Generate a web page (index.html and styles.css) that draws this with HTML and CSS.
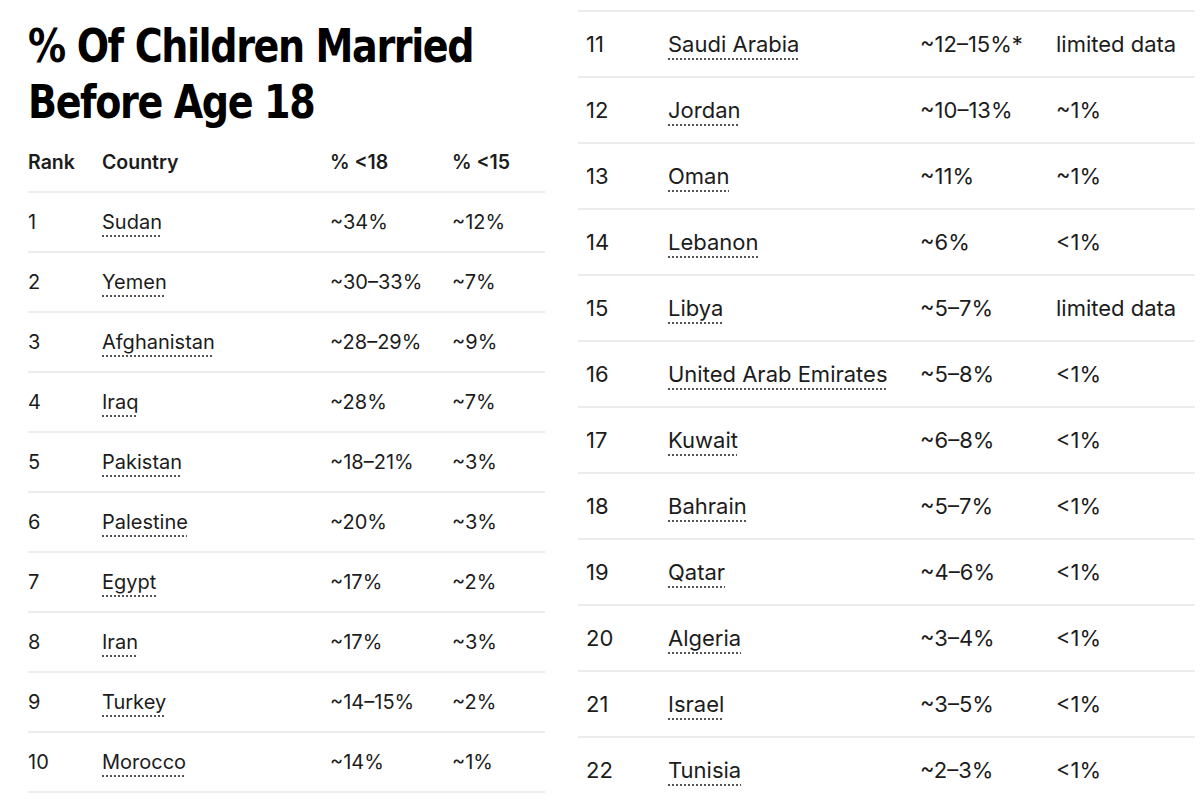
FILE: index.html
```html
<!DOCTYPE html>
<html lang="en">
<head>
<meta charset="utf-8">
<title>Child Marriage Rates</title>
<link rel="stylesheet" href="styles.css">
</head>
<body>
<div class="page">
  <section class="panel left">
    <h1 class="title">% Of Children Married<br>Before Age 18</h1>
    <div class="table">
      <div class="row head"><span>Rank</span><span>Country</span><span>% &lt;18</span><span>% &lt;15</span></div>
      <div class="row"><span>1</span><span class="c">Sudan</span><span>~34%</span><span>~12%</span></div>
      <div class="row"><span>2</span><span class="c">Yemen</span><span>~30–33%</span><span>~7%</span></div>
      <div class="row"><span>3</span><span class="c">Afghanistan</span><span>~28–29%</span><span>~9%</span></div>
      <div class="row"><span>4</span><span class="c">Iraq</span><span>~28%</span><span>~7%</span></div>
      <div class="row"><span>5</span><span class="c">Pakistan</span><span>~18–21%</span><span>~3%</span></div>
      <div class="row"><span>6</span><span class="c">Palestine</span><span>~20%</span><span>~3%</span></div>
      <div class="row"><span>7</span><span class="c">Egypt</span><span>~17%</span><span>~2%</span></div>
      <div class="row"><span>8</span><span class="c">Iran</span><span>~17%</span><span>~3%</span></div>
      <div class="row"><span>9</span><span class="c">Turkey</span><span>~14–15%</span><span>~2%</span></div>
      <div class="row"><span>10</span><span class="c">Morocco</span><span>~14%</span><span>~1%</span></div>
    </div>
  </section>
  <section class="panel right">
    <div class="table big">
      <div class="row"><span>11</span><span class="c">Saudi Arabia</span><span>~12–15%*</span><span>limited data</span></div>
      <div class="row"><span>12</span><span class="c">Jordan</span><span>~10–13%</span><span>~1%</span></div>
      <div class="row"><span>13</span><span class="c">Oman</span><span>~11%</span><span>~1%</span></div>
      <div class="row"><span>14</span><span class="c">Lebanon</span><span>~6%</span><span>&lt;1%</span></div>
      <div class="row"><span>15</span><span class="c">Libya</span><span>~5–7%</span><span>limited data</span></div>
      <div class="row"><span>16</span><span class="c">United Arab Emirates</span><span>~5–8%</span><span>&lt;1%</span></div>
      <div class="row"><span>17</span><span class="c">Kuwait</span><span>~6–8%</span><span>&lt;1%</span></div>
      <div class="row"><span>18</span><span class="c">Bahrain</span><span>~5–7%</span><span>&lt;1%</span></div>
      <div class="row"><span>19</span><span class="c">Qatar</span><span>~4–6%</span><span>&lt;1%</span></div>
      <div class="row"><span>20</span><span class="c">Algeria</span><span>~3–4%</span><span>&lt;1%</span></div>
      <div class="row"><span>21</span><span class="c">Israel</span><span>~3–5%</span><span>&lt;1%</span></div>
      <div class="row"><span>22</span><span class="c">Tunisia</span><span>~2–3%</span><span>&lt;1%</span></div>
    </div>
  </section>
</div>
</body>
</html>
```

FILE: styles.css
```css
html, body {
  margin: 0;
  padding: 0;
  background: #ffffff;
}

body {
  font-family: "Inter", "Liberation Sans", sans-serif;
  color: #1c1c1c;
  width: 1200px;
  height: 800px;
  overflow: hidden;
}

.page {
  display: flex;
  gap: 33px;
}

.panel.left {
  width: 517px;
  padding-left: 28px;
}

.panel.right {
  width: 617px;
  padding-top: 10px;
}

.title {
  margin: 0;
  padding-top: 18px;
  height: 115px;
  font-family: "DejaVu Sans", sans-serif;
  font-stretch: condensed;
  font-weight: 900;
  font-size: 46px;
  line-height: 56px;
  letter-spacing: -1.5px;
  color: #000;
  transform: scaleX(0.92);
  transform-origin: left center;
  white-space: nowrap;
}

.table .row {
  display: grid;
  grid-template-columns: 74px 228px 122px 1fr;
  align-items: center;
  height: 58px;
  border-bottom: 2px solid #ececec;
  font-size: 20px;
}

.table .row.head {
  font-weight: 600;
  font-size: 19.5px;
}

.table.big {
  border-top: 2px solid #ececec;
}

.table.big .row {
  grid-template-columns: 82px 252px 136px 1fr;
  height: 64px;
  font-size: 22px;
  padding-left: 8px;
}

.c {
  justify-self: start;
  text-decoration: underline dotted #555;
  text-decoration-thickness: 2px;
  text-underline-offset: 6px;
}
```
